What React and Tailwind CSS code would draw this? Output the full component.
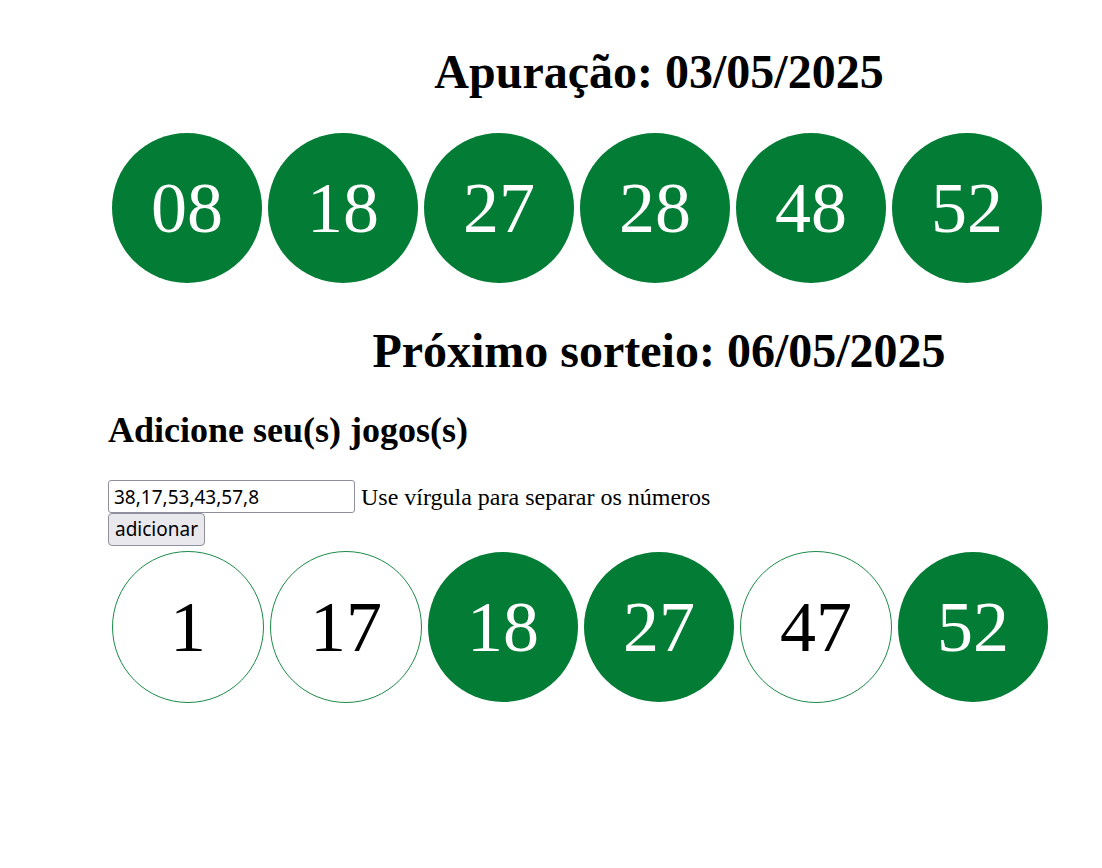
const drawn = ["08", "18", "27", "28", "48", "52"];
const game = [
  { n: "1", hit: false },
  { n: "17", hit: false },
  { n: "18", hit: true },
  { n: "27", hit: true },
  { n: "47", hit: false },
  { n: "52", hit: true },
];

function Ball({ n, hit }) {
  if (hit) {
    return (
      <div className="flex h-[150px] w-[150px] shrink-0 items-center justify-center rounded-full bg-[#037c35] text-[72px] leading-none text-white">
        {n}
      </div>
    );
  }
  return (
    <div className="flex h-[152px] w-[152px] shrink-0 items-center justify-center rounded-full border border-[#1b8a48] bg-white text-[72px] leading-none text-black">
      {n}
    </div>
  );
}

export default function App() {
  return (
    <div className="min-h-screen w-full bg-white pt-[44px] font-['Liberation_Serif',serif] text-[24px] text-black">
      {/* resultado */}
      <h1 className="pl-[216px] text-center text-[48px] font-bold leading-[55px]">
        Apuração: 03/05/2025
      </h1>
      <div className="mt-[34px] flex gap-[6px] pl-[112px]">
        {drawn.map((n) => (
          <Ball key={n} n={n} hit />
        ))}
      </div>

      <h1 className="mt-[40px] pl-[216px] text-center text-[48px] font-bold leading-[55px]">
        Próximo sorteio: 06/05/2025
      </h1>

      {/* jogos */}
      <div className="pl-[108px]">
        <h2 className="mt-[32px] text-[36px] font-bold leading-[41px]">
          Adicione seu(s) jogos(s)
        </h2>
        <div className="mt-[29px] flex items-center gap-[6px]">
          <input
            readOnly
            value="38,17,53,43,57,8"
            className="h-[33px] w-[247px] rounded-[3px] border border-[#8f8f9d] bg-white px-[5px] font-['Noto_Sans',sans-serif] text-[19px] text-black outline-none"
          />
          <span className="leading-[28px]">Use vírgula para separar os números</span>
        </div>
        <button className="block h-[33px] w-[97px] rounded-[4px] border border-[#8f8f9d] bg-[#e9e9ed] font-['Noto_Sans',sans-serif] text-[19px] leading-none text-black">
          adicionar
        </button>
      </div>
      <div className="mt-[5px] flex items-center gap-[6px] pl-[112px]">
        {game.map((b) => (
          <Ball key={b.n} n={b.n} hit={b.hit} />
        ))}
      </div>
    </div>
  );
}
